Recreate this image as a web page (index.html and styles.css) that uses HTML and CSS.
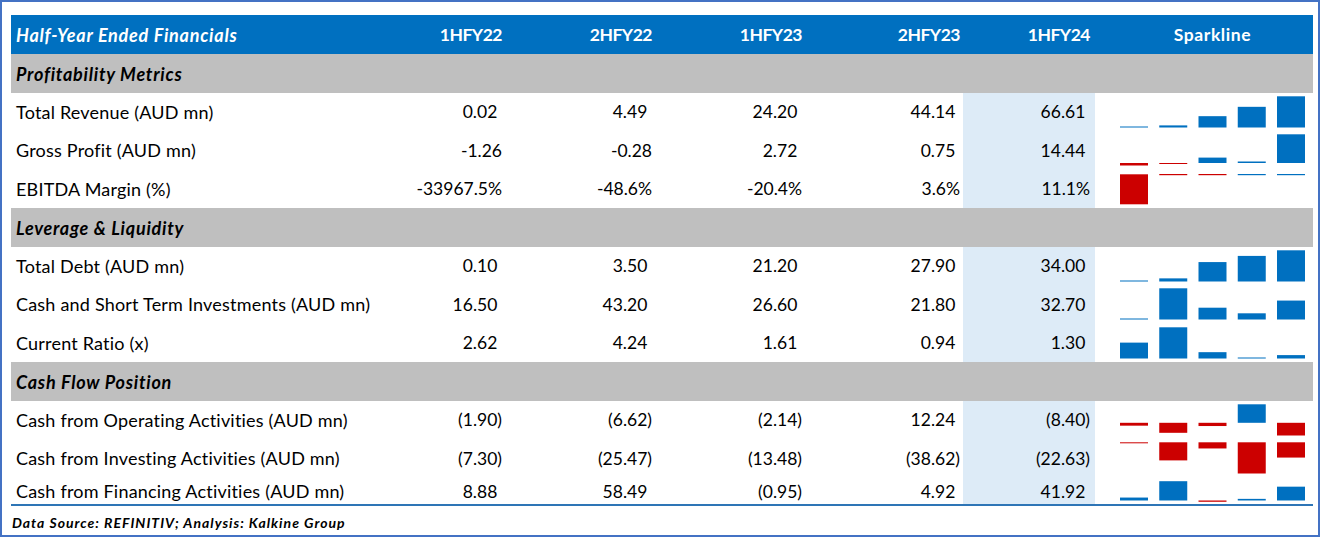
FILE: index.html
```html
<!DOCTYPE html>
<html lang="en">
<head>
<meta charset="utf-8">
<title>Half-Year Ended Financials</title>
<link rel="stylesheet" href="styles.css">
</head>
<body>
<div class="frame">
  <div class="sheet">
    <div class="row head">
      <div class="c lbl">Half-Year Ended Financials</div>
      <div class="c n">1HFY22</div>
      <div class="c n">2HFY22</div>
      <div class="c n">1HFY23</div>
      <div class="c n c4">2HFY23</div>
      <div class="c n">1HFY24</div>
      <div class="c spark-h">Sparkline</div>
    </div>

    <div class="row sect"><div class="c lbl">Profitability Metrics</div></div>

    <div class="row data">
      <div class="c lbl">Total Revenue (AUD mn)</div>
      <div class="c n">0.02<span class="pad">)</span></div>
      <div class="c n">4.49<span class="pad">)</span></div>
      <div class="c n">24.20<span class="pad">)</span></div>
      <div class="c n c4">44.14<span class="pad">)</span></div>
      <div class="c n hl">66.61<span class="pad">)</span></div>
      <div class="c spark"><svg width="218" height="38.5" viewBox="0 0 218 38.5">
        <rect class="pos" x="25" y="33.5" width="28" height="1"/>
        <rect class="pos" x="64.25" y="32.4" width="28" height="2.1"/>
        <rect class="pos" x="103.5" y="23.17" width="28" height="11.33"/>
        <rect class="pos" x="142.75" y="13.83" width="28" height="20.67"/>
        <rect class="pos" x="182" y="3.3" width="28" height="31.2"/>
      </svg></div>
    </div>

    <div class="row data">
      <div class="c lbl">Gross Profit (AUD mn)</div>
      <div class="c n">-1.26</div>
      <div class="c n">-0.28</div>
      <div class="c n">2.72<span class="pad">)</span></div>
      <div class="c n c4">0.75<span class="pad">)</span></div>
      <div class="c n hl">14.44<span class="pad">)</span></div>
      <div class="c spark"><svg width="218" height="38.5" viewBox="0 0 218 38.5">
        <rect class="neg" x="25" y="32" width="28" height="2.5"/>
        <rect class="neg" x="64.25" y="32" width="28" height="1"/>
        <rect class="pos" x="103.5" y="26.6" width="28" height="5.4"/>
        <rect class="pos" x="142.75" y="30.5" width="28" height="1.5"/>
        <rect class="pos" x="182" y="3.3" width="28" height="28.7"/>
      </svg></div>
    </div>

    <div class="row data">
      <div class="c lbl">EBITDA Margin (%)</div>
      <div class="c n">-33967.5%</div>
      <div class="c n">-48.6%</div>
      <div class="c n">-20.4%</div>
      <div class="c n c4">3.6%</div>
      <div class="c n hl">11.1%</div>
      <div class="c spark"><svg width="218" height="38.5" viewBox="0 0 218 38.5">
        <rect class="neg" x="25" y="4.3" width="28" height="30"/>
        <rect class="neg" x="64.25" y="4" width="28" height="1.2"/>
        <rect class="neg" x="103.5" y="4" width="28" height="1.2"/>
        <rect class="pos" x="142.75" y="4" width="28" height="1.2"/>
        <rect class="pos" x="182" y="4" width="28" height="1.2"/>
      </svg></div>
    </div>

    <div class="row sect"><div class="c lbl">Leverage &amp; Liquidity</div></div>

    <div class="row data">
      <div class="c lbl">Total Debt (AUD mn)</div>
      <div class="c n">0.10<span class="pad">)</span></div>
      <div class="c n">3.50<span class="pad">)</span></div>
      <div class="c n">21.20<span class="pad">)</span></div>
      <div class="c n c4">27.90<span class="pad">)</span></div>
      <div class="c n hl">34.00<span class="pad">)</span></div>
      <div class="c spark"><svg width="218" height="38.5" viewBox="0 0 218 38.5">
        <rect class="pos" x="25" y="33.5" width="28" height="1"/>
        <rect class="pos" x="64.25" y="31.37" width="28" height="3.13"/>
        <rect class="pos" x="103.5" y="15.08" width="28" height="19.42"/>
        <rect class="pos" x="142.75" y="8.91" width="28" height="25.59"/>
        <rect class="pos" x="182" y="3.3" width="28" height="31.2"/>
      </svg></div>
    </div>

    <div class="row data">
      <div class="c lbl">Cash and Short Term Investments (AUD mn)</div>
      <div class="c n">16.50<span class="pad">)</span></div>
      <div class="c n">43.20<span class="pad">)</span></div>
      <div class="c n">26.60<span class="pad">)</span></div>
      <div class="c n c4">21.80<span class="pad">)</span></div>
      <div class="c n hl">32.70<span class="pad">)</span></div>
      <div class="c spark"><svg width="218" height="38.5" viewBox="0 0 218 38.5">
        <rect class="pos" x="25" y="33.5" width="28" height="1"/>
        <rect class="pos" x="64.25" y="3.3" width="28" height="31.2"/>
        <rect class="pos" x="103.5" y="22.7" width="28" height="11.8"/>
        <rect class="pos" x="142.75" y="28.31" width="28" height="6.19"/>
        <rect class="pos" x="182" y="15.57" width="28" height="18.93"/>
      </svg></div>
    </div>

    <div class="row data">
      <div class="c lbl">Current Ratio (x)</div>
      <div class="c n">2.62<span class="pad">)</span></div>
      <div class="c n">4.24<span class="pad">)</span></div>
      <div class="c n">1.61<span class="pad">)</span></div>
      <div class="c n c4">0.94<span class="pad">)</span></div>
      <div class="c n hl">1.30<span class="pad">)</span></div>
      <div class="c spark"><svg width="218" height="38.5" viewBox="0 0 218 38.5">
        <rect class="pos" x="25" y="18.62" width="28" height="15.88"/>
        <rect class="pos" x="64.25" y="3.3" width="28" height="31.2"/>
        <rect class="pos" x="103.5" y="28.17" width="28" height="6.33"/>
        <rect class="pos" x="142.75" y="33.5" width="28" height="1"/>
        <rect class="pos" x="182" y="31.1" width="28" height="3.4"/>
      </svg></div>
    </div>

    <div class="row sect"><div class="c lbl">Cash Flow Position</div></div>

    <div class="row data">
      <div class="c lbl">Cash from Operating Activities (AUD mn)</div>
      <div class="c n">(1.90)</div>
      <div class="c n">(6.62)</div>
      <div class="c n">(2.14)</div>
      <div class="c n c4">12.24<span class="pad">)</span></div>
      <div class="c n hl">(8.40)</div>
      <div class="c spark"><svg width="218" height="38.5" viewBox="0 0 218 38.5">
        <rect class="neg" x="25" y="21.8" width="28" height="2.87"/>
        <rect class="neg" x="64.25" y="21.8" width="28" height="10.01"/>
        <rect class="neg" x="103.5" y="21.8" width="28" height="3.23"/>
        <rect class="pos" x="142.75" y="3.3" width="28" height="18.5"/>
        <rect class="neg" x="182" y="21.8" width="28" height="12.7"/>
      </svg></div>
    </div>

    <div class="row data">
      <div class="c lbl">Cash from Investing Activities (AUD mn)</div>
      <div class="c n">(7.30)</div>
      <div class="c n">(25.47)</div>
      <div class="c n">(13.48)</div>
      <div class="c n c4">(38.62)</div>
      <div class="c n hl">(22.63)</div>
      <div class="c spark"><svg width="218" height="38.5" viewBox="0 0 218 38.5">
        <rect class="neg" x="25" y="3.3" width="28" height="1"/>
        <rect class="neg" x="64.25" y="3.3" width="28" height="18.1"/>
        <rect class="neg" x="103.5" y="3.3" width="28" height="6.16"/>
        <rect class="neg" x="142.75" y="3.3" width="28" height="31.2"/>
        <rect class="neg" x="182" y="3.3" width="28" height="15.27"/>
      </svg></div>
    </div>

    <div class="row data last">
      <div class="c lbl">Cash from Financing Activities (AUD mn)</div>
      <div class="c n">8.88<span class="pad">)</span></div>
      <div class="c n">58.49<span class="pad">)</span></div>
      <div class="c n">(0.95)</div>
      <div class="c n c4">4.92<span class="pad">)</span></div>
      <div class="c n hl">41.92<span class="pad">)</span></div>
      <div class="c spark"><svg width="218" height="26" viewBox="0 0 218 26">
        <rect class="pos" x="25" y="19.56" width="28" height="2.93"/>
        <rect class="pos" x="64.25" y="3.2" width="28" height="19.29"/>
        <rect class="neg" x="103.5" y="22.49" width="28" height="1.3"/>
        <rect class="pos" x="142.75" y="20.87" width="28" height="1.62"/>
        <rect class="pos" x="182" y="8.67" width="28" height="13.82"/>
      </svg></div>
    </div>
  </div>
  <div class="foot">Data Source: REFINITIV; Analysis: Kalkine Group</div>
</div>
</body>
</html>
```

FILE: styles.css
```css
* { box-sizing: border-box; }

html, body {
  margin: 0;
  padding: 0;
  background: #ffffff;
}

body {
  font-family: Lato, "Open Sans", "Liberation Sans", sans-serif;
  color: #000000;
}

.frame {
  width: 1320px;
  height: 537px;
  border: 2px solid #4472c4;
  padding: 13px 0 0 9px;
}

.sheet {
  width: 1302px;
  border-bottom: 2px solid #2e75b6;
}

.row {
  display: grid;
  grid-template-columns: 346px 150px 150px 150px 156px 132px 218px;
  align-items: stretch;
  height: 38.5px;
  font-size: 17.5px;
  white-space: nowrap;
}

.c {
  display: flex;
  align-items: center;
  min-width: 0;
}

.lbl {
  padding-left: 5px;
  font-size: 18px;
  letter-spacing: 0.2px;
}

.n {
  justify-content: flex-end;
  padding-right: 5px;
}

.n.c4 {
  padding-right: 3px;
}

.pad {
  visibility: hidden;
}

.head {
  height: 39px;
  background: #0070c0;
  color: #ffffff;
  font-weight: 700;
}

.head .lbl,
.sect .lbl {
  font-style: italic;
  letter-spacing: 0.75px;
}

.head .n {
  letter-spacing: -0.5px;
}

.spark-h {
  justify-content: center;
  padding-left: 17px;
  letter-spacing: 0.6px;
}

.sect {
  display: flex;
  background: #bfbfbf;
  font-weight: 700;
}

.sect .lbl {
  padding-top: 1px;
}

.hl {
  background: #ddebf7;
}

.spark {
  align-items: flex-start;
}

.spark svg {
  display: block;
}

.pos { fill: #0070c0; }
.neg { fill: #cc0000; }

.last {
  height: 26px;
}

.last .c {
  align-items: flex-end;
  padding-bottom: 2px;
}

.last .spark {
  align-items: flex-start;
  padding-bottom: 0;
}

.foot {
  padding: 8px 0 0 1px;
  font-size: 14px;
  line-height: 17px;
  letter-spacing: 1px;
  font-weight: 700;
  font-style: italic;
}
```
